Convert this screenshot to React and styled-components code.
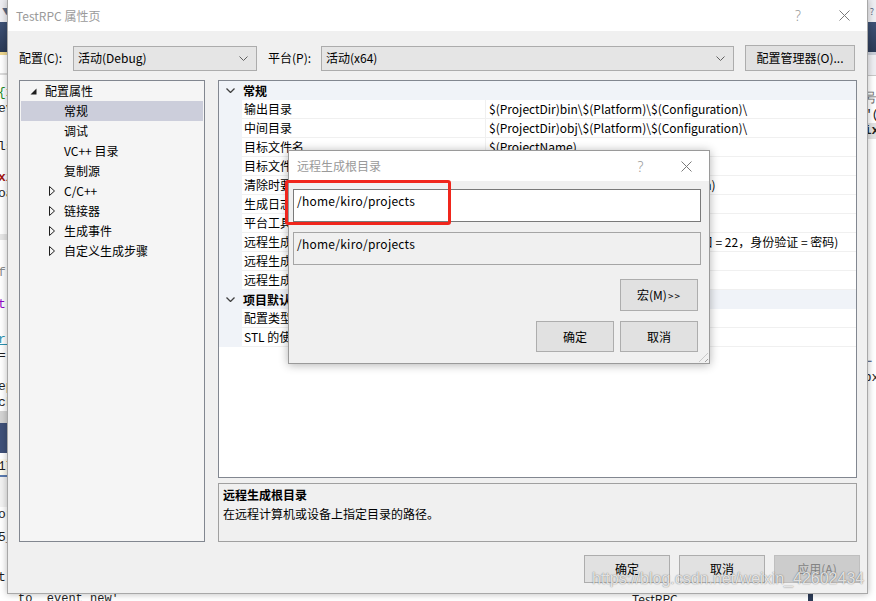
import React from "react";
import styled, { createGlobalStyle, css } from "styled-components";

const UI_FONT = `"Noto Sans CJK SC", "Noto Sans", sans-serif`;
const CODE_FONT = `"Liberation Mono", "DejaVu Sans Mono", monospace`;

const GlobalStyle = createGlobalStyle`
  html, body { margin: 0; padding: 0; background: #ffffff; }
  body { font-family: ${UI_FONT}; font-size: 12px; color: #000; }
  * { box-sizing: border-box; }
`;

/* ---------- desktop & IDE backdrop ---------- */

const Desktop = styled.div`
  position: relative;
  width: 876px;
  height: 601px;
  overflow: hidden;
  background: #ffffff;
`;

const Ide = styled.div`
  display: flex;
  flex-direction: column;
  height: 100%;
`;

const IdeToolbar = styled.div`
  height: 22px;
  background: #eeeef2;
  display: flex;
  justify-content: space-between;
  align-items: center;
  padding: 0 2px;
  color: #5b6b86;
  font-size: 9px;
`;

const IdeTabs = styled.div`
  height: 30px;
  background: linear-gradient(#3e5276, #2c3b57);
`;

const IdeAccent = styled.div`
  height: 3px;
  background: linear-gradient(90deg, #efd890 0 40px, #c9ced8 40px);
`;

const IdeEditor = styled.div`
  flex: 1;
  display: flex;
  justify-content: space-between;
  overflow: hidden;
`;

const CodeColumn = styled.div`
  display: flex;
  flex-direction: column;
  width: ${(p) => p.$w}px;
  margin-left: ${(p) => p.$shift || 0}px;
  font-family: ${CODE_FONT};
  font-size: 13px;
`;

const CodeLine = styled.div`
  height: 16px;
  line-height: 16px;
  white-space: pre;
  color: ${(p) => p.$color || "#1e1e1e"};
  font-weight: ${(p) => (p.$bold ? 700 : 400)};
  background: ${(p) => p.$bg || "transparent"};
  text-decoration: ${(p) => (p.$under ? "underline" : "none")};
`;

const Gap = styled.div`
  height: ${(p) => p.$h}px;
  flex: none;
  background: ${(p) => p.$bg || "transparent"};
`;

const IdeStatus = styled.div`
  height: 10px;
  display: flex;
  align-items: flex-start;
  font-family: ${CODE_FONT};
  font-size: 12px;
  line-height: 14px;
  padding-top: 1px;
  white-space: pre;
  color: #1e1e1e;
`;

const StatusText = styled.span`
  width: ${(p) => p.$w}px;
  padding-left: ${(p) => p.$pad || 0}px;
  flex: none;
  font-family: ${(p) => (p.$ui ? UI_FONT : CODE_FONT)};
`;

const StatusBlock = styled.span`
  width: 5px;
  height: 10px;
  background: #2c3b57;
  flex: none;
`;

/* ---------- shared window parts ---------- */

const TitleBar = styled.div`
  height: ${(p) => p.$h}px;
  background: #ffffff;
  display: flex;
  align-items: center;
  flex: none;
`;

const TitleText = styled.div`
  flex: 1;
  padding-left: 8px;
  color: #9a9a9a;
  font-size: 12px;
  line-height: 16px;
`;

const CaptionButton = styled.div`
  width: ${(p) => p.$w}px;
  height: 100%;
  display: flex;
  align-items: center;
  justify-content: center;
  color: #9a9a9a;
  font-family: "Noto Sans", sans-serif;
  font-size: 14px;
  font-weight: 300;
`;

const CloseGlyph = () => (
  <svg width="11" height="11" viewBox="0 0 11 11">
    <path d="M0.5 0.5 L10.5 10.5 M10.5 0.5 L0.5 10.5" stroke="#7a7a7a" strokeWidth="1" fill="none" />
  </svg>
);

const PushButton = styled.button`
  width: ${(p) => p.$w}px;
  height: ${(p) => p.$h}px;
  flex: none;
  margin: 0;
  padding: 0;
  font-family: ${UI_FONT};
  font-size: 12px;
  line-height: 16px;
  color: #000;
  background: #e1e1e1;
  border: 1px solid #adadad;
  ${(p) =>
    p.$disabled &&
    css`
      background: #cccccc;
      border-color: #bfbfbf;
      color: #838383;
    `}
`;

const Chevrons = styled.span`
  font-size: 10px;
  letter-spacing: 1px;
  margin-left: 1px;
`;

/* ---------- property pages window ---------- */

const MainWindow = styled.div`
  position: absolute;
  left: 7px;
  top: -1px;
  width: 861px;
  height: 595px;
  border: 1px solid #a8a8a8;
  background: #f0f0f0;
  box-shadow: 0 0 7px rgba(0, 0, 0, 0.28);
  display: flex;
  flex-direction: column;
`;

const WindowBody = styled.div`
  flex: 1;
  display: flex;
  flex-direction: column;
  padding: 14px 10px 10px 11px;
`;

const ConfigRow = styled.div`
  height: 26px;
  display: flex;
  align-items: center;
`;

const FieldLabel = styled.div`
  width: ${(p) => p.$w}px;
  padding-left: ${(p) => p.$pad || 0}px;
  flex: none;
  line-height: 16px;
`;

const Combo = styled.div`
  width: ${(p) => p.$w}px;
  height: 25px;
  flex: none;
  display: flex;
  align-items: center;
  justify-content: space-between;
  padding: 0 8px 0 4px;
  background: #e5e5e5;
  border: 1px solid #acacac;
  line-height: 16px;
`;

const ComboChevron = () => (
  <svg width="9" height="5" viewBox="0 0 9 5">
    <path d="M0.5 0.5 L4.5 4.5 L8.5 0.5" stroke="#606060" strokeWidth="1" fill="none" />
  </svg>
);

const Spacer = styled.div`
  flex: 1;
`;

const ManagerButton = styled(PushButton)`
  margin-right: 2px;
`;

const MainArea = styled.div`
  margin-top: 9px;
  height: 462px;
  display: flex;
  gap: 13px;
`;

const Tree = styled.div`
  width: 186px;
  flex: none;
  border: 1px solid #828790;
  background: #f5f5f5;
  padding: 0 1px;
`;

const TreeRow = styled.div`
  height: 20px;
  display: flex;
  align-items: center;
  padding-left: ${(p) => 9 + p.$level * 19}px;
  background: ${(p) => (p.$selected ? "#cccedb" : "transparent")};
  line-height: 16px;
`;

const TreeToggle = styled.span`
  width: 15px;
  flex: none;
  display: flex;
  align-items: center;
`;

const ExpandedMark = () => (
  <svg width="7" height="7" viewBox="0 0 7 7">
    <path d="M6.5 0.5 L6.5 6.5 L0.5 6.5 Z" fill="#1e1e1e" />
  </svg>
);

const CollapsedMark = () => (
  <svg width="6" height="10" viewBox="0 0 6 10">
    <path d="M0.5 0.5 L5.5 5 L0.5 9.5 Z" fill="none" stroke="#1e1e1e" strokeWidth="1" />
  </svg>
);

const RightColumn = styled.div`
  flex: 1;
  display: flex;
  flex-direction: column;
  gap: 5px;
`;

const Grid = styled.div`
  height: 398px;
  flex: none;
  border: 1px solid #828790;
  background: #ffffff;
`;

const GridCategory = styled.div`
  height: 19px;
  display: flex;
  align-items: center;
  background: #f0f3f8;
  font-weight: 700;
  line-height: 16px;
`;

const CategoryToggle = styled.span`
  width: 24px;
  flex: none;
  display: flex;
  justify-content: center;
  padding-right: 1px;
`;

const CategoryChevron = () => (
  <svg width="9" height="5" viewBox="0 0 9 5">
    <path d="M0.5 0.5 L4.5 4.5 L8.5 0.5" stroke="#404040" strokeWidth="1.3" fill="none" />
  </svg>
);

const GridRow = styled.div`
  height: 19px;
  display: flex;
  line-height: 18px;
`;

const GridGutter = styled.div`
  width: 23px;
  flex: none;
  background: #f0f3f8;
`;

const GridName = styled.div`
  width: 244px;
  flex: none;
  padding-left: 2px;
  border-right: 1px solid #f0f0f0;
  border-bottom: 1px solid #f0f0f0;
  white-space: nowrap;
  overflow: hidden;
`;

const GridValue = styled.div`
  flex: 1;
  padding-left: 3px;
  border-bottom: 1px solid #f0f0f0;
  white-space: pre;
  overflow: hidden;
`;

const Description = styled.div`
  flex: 1;
  border: 1px solid #a0a0a0;
  background: #f0f0f0;
  padding: 1px 4px;
  line-height: 19px;
`;

const DescTitle = styled.div`
  font-weight: 700;
`;

const FooterRow = styled.div`
  margin-top: 13px;
  margin-right: -3px;
  display: flex;
  justify-content: flex-end;
  gap: 9px;
`;

/* ---------- path editor dialog ---------- */

const Dialog = styled.div`
  position: absolute;
  left: 288px;
  top: 150px;
  width: 422px;
  height: 214px;
  border: 1px solid #9a9a9a;
  background: #f0f0f0;
  box-shadow: 0 1px 9px rgba(0, 0, 0, 0.3);
  display: flex;
  flex-direction: column;
`;

const DialogBody = styled.div`
  flex: 1;
  display: flex;
  flex-direction: column;
  padding: 8px 8px 10px 4px;
  position: relative;
`;

const PathBox = styled.div`
  height: 33px;
  flex: none;
  margin-top: ${(p) => p.$mt || 0}px;
  padding: 2px 3px;
  line-height: 18px;
  font-size: 12px;
  letter-spacing: 0.25px;
  background: ${(p) => (p.$readOnly ? "#f0f0f0" : "#ffffff")};
  border: 1px solid ${(p) => (p.$readOnly ? "#a5a5a5" : "#7a7a7a")};
`;

const DialogButtons = styled.div`
  margin-top: ${(p) => p.$mt}px;
  padding-right: 3px;
  display: flex;
  justify-content: flex-end;
  gap: 6px;
`;

const SizeGrip = styled.div`
  position: absolute;
  right: 1px;
  bottom: 1px;
  width: 9px;
  height: 9px;
  background: repeating-linear-gradient(
    135deg,
    transparent 0 2px,
    #a0a0a0 2px 3px,
    transparent 3px 4px
  );
  clip-path: polygon(100% 0, 100% 100%, 0 100%);
`;

const Highlight = styled.div`
  position: absolute;
  left: 285px;
  top: 180px;
  width: 166px;
  height: 45px;
  border: 3px solid #f0261c;
  border-radius: 3px;
`;

const Watermark = styled.div`
  position: absolute;
  left: 592px;
  top: 569px;
  font-family: "Liberation Sans", Arial, sans-serif;
  font-size: 16px;
  line-height: 20px;
  letter-spacing: 0px;
  color: rgba(255, 255, 255, 0.8);
  text-shadow: 0 0 1px rgba(0, 0, 0, 0.45), 0 0 2px rgba(0, 0, 0, 0.2);
  white-space: nowrap;
`;

/* ---------- data ---------- */

const treeItems = [
  { label: "配置属性", level: 0, mark: "open" },
  { label: "常规", level: 1, selected: true },
  { label: "调试", level: 1 },
  { label: "VC++ 目录", level: 1 },
  { label: "复制源", level: 1 },
  { label: "C/C++", level: 1, mark: "closed" },
  { label: "链接器", level: 1, mark: "closed" },
  { label: "生成事件", level: 1, mark: "closed" },
  { label: "自定义生成步骤", level: 1, mark: "closed" },
];

const sections = [
  {
    title: "常规",
    rows: [
      ["输出目录", "$(ProjectDir)bin\\$(Platform)\\$(Configuration)\\"],
      ["中间目录", "$(ProjectDir)obj\\$(Platform)\\$(Configuration)\\"],
      ["目标文件名", "$(ProjectName)"],
      ["目标文件扩展名", ".out"],
      ["清除时要删除的扩展名", "*.d;*.tlog; $(ExtensionsToDeleteOnClean)"],
      ["生成日志文件", "$(IntDir)$(MSBuildProjectName).log"],
      ["平台工具集", "Remote_GCC_1_0"],
      ["远程生成计算机", "192.168.150.128 (用户名 = kirolinux, 端口 = 22，身份验证 = 密码)"],
      ["远程生成根目录", "~/projects"],
      ["远程生成项目目录", "$(RemoteRootDir)/$(ProjectName)"],
    ],
  },
  {
    title: "项目默认值",
    rows: [
      ["配置类型", "应用程序(.out)"],
      ["STL 的使用", "共享 GNU 标准 C++ 库"],
    ],
  },
];

/* editor text peeking out at the left edge */
const leftCode = [
  { gap: 18 },
  { gap: 2, bg: "#dcdcdc" },
  { gap: 10 },
  { text: "{x", color: "#1c8a1c" },
  { text: "ev" },
  { gap: 22 },
  { text: "ls" },
  { gap: 15 },
  { text: "xi", color: "#a31515", bold: true },
  { text: "oa" },
  { gap: 32 },
  { gap: 6, bg: "#e6e6e6" },
  { gap: 25 },
  { text: "f", color: "#8a8a8a" },
  { gap: 16 },
  { text: "t", color: "#8f08c4" },
  { gap: 19 },
  { text: "r_", color: "#2b91af", under: true },
  { text: "=" },
  { gap: 15 },
  { text: "ep" },
  { text: "ck" },
  { gap: 12, bg: "#d4d4d4" },
  { gap: 30, bg: "#3f5179" },
  { gap: 6 },
  { text: "17", bg: "#fdfbf0" },
  { gap: 2, bg: "#5b7bb0" },
  { gap: 30, bg: "#f2f2f2" },
  { text: "or" },
  { gap: 7 },
  { text: "5_" },
  { gap: 24 },
  { text: "t" },
];

/* editor text peeking out at the right edge */
const rightCode = [
  { gap: 20, bg: "#eeeef2" },
  { gap: 1, bg: "#c8c8c8" },
  { gap: 15 },
  { text: " 号(", color: "#6b6b6b" },
  { text: " \"(" },
  { text: " ix", bold: true, bg: "#e2e2e2" },
  { gap: 215 },
  { text: " ─", color: "#3f5179", bold: true },
  { text: " bx" },
];

const renderCode = (items) =>
  items.map((it, i) =>
    it.text !== undefined ? (
      <CodeLine key={i} $color={it.color} $bold={it.bold} $bg={it.bg} $under={it.under}>
        {it.text}
      </CodeLine>
    ) : (
      <Gap key={i} $h={it.gap} $bg={it.bg} />
    )
  );

/* ---------- page ---------- */

export default function App() {
  return (
    <Desktop>
      <GlobalStyle />

      <Ide>
        <IdeToolbar>
          <span>▼</span>
          <span>?</span>
        </IdeToolbar>
        <IdeTabs />
        <IdeAccent />
        <IdeEditor>
          <CodeColumn $w={40} $shift={-2}>{renderCode(leftCode)}</CodeColumn>
          <CodeColumn $w={20}>{renderCode(rightCode)}</CodeColumn>
        </IdeEditor>
        <IdeStatus>
          <StatusText $w={632} $pad={18}>to `event_new'</StatusText>
          <StatusText $w={176} $ui>TestRPC</StatusText>
          <StatusBlock />
        </IdeStatus>
      </Ide>

      <MainWindow>
        <TitleBar $h={31}>
          <TitleText>TestRPC 属性页</TitleText>
          <CaptionButton $w={46}>?</CaptionButton>
          <CaptionButton $w={46}>
            <CloseGlyph />
          </CaptionButton>
        </TitleBar>

        <WindowBody>
          <ConfigRow>
            <FieldLabel $w={54}>配置(C):</FieldLabel>
            <Combo $w={184}>
              <span>活动(Debug)</span>
              <ComboChevron />
            </Combo>
            <FieldLabel $w={64} $pad={11}>平台(P):</FieldLabel>
            <Combo $w={413}>
              <span>活动(x64)</span>
              <ComboChevron />
            </Combo>
            <Spacer />
            <ManagerButton $w={110} $h={26}>配置管理器(O)...</ManagerButton>
          </ConfigRow>

          <MainArea>
            <Tree>
              {treeItems.map((item) => (
                <TreeRow key={item.label} $level={item.level} $selected={item.selected}>
                  <TreeToggle>
                    {item.mark === "open" && <ExpandedMark />}
                    {item.mark === "closed" && <CollapsedMark />}
                  </TreeToggle>
                  {item.label}
                </TreeRow>
              ))}
            </Tree>

            <RightColumn>
              <Grid>
                {sections.map((section) => (
                  <React.Fragment key={section.title}>
                    <GridCategory>
                      <CategoryToggle>
                        <CategoryChevron />
                      </CategoryToggle>
                      {section.title}
                    </GridCategory>
                    {section.rows.map(([name, value]) => (
                      <GridRow key={name}>
                        <GridGutter />
                        <GridName>{name}</GridName>
                        <GridValue>{value}</GridValue>
                      </GridRow>
                    ))}
                  </React.Fragment>
                ))}
              </Grid>

              <Description>
                <DescTitle>远程生成根目录</DescTitle>
                <div>在远程计算机或设备上指定目录的路径。</div>
              </Description>
            </RightColumn>
          </MainArea>

          <FooterRow>
            <PushButton $w={86} $h={28}>确定</PushButton>
            <PushButton $w={86} $h={28}>取消</PushButton>
            <PushButton $w={86} $h={28} $disabled>应用(A)</PushButton>
          </FooterRow>
        </WindowBody>
      </MainWindow>

      <Dialog>
        <TitleBar $h={30}>
          <TitleText>远程生成根目录</TitleText>
          <CaptionButton $w={45}>?</CaptionButton>
          <CaptionButton $w={46}>
            <CloseGlyph />
          </CaptionButton>
        </TitleBar>
        <DialogBody>
          <PathBox>/home/kiro/projects</PathBox>
          <PathBox $mt={10} $readOnly>
            /home/kiro/projects
          </PathBox>
          <DialogButtons $mt={14}>
            <PushButton $w={78} $h={32}>
              宏(M)<Chevrons>&gt;&gt;</Chevrons>
            </PushButton>
          </DialogButtons>
          <DialogButtons $mt={10}>
            <PushButton $w={78} $h={31}>确定</PushButton>
            <PushButton $w={78} $h={31}>取消</PushButton>
          </DialogButtons>
          <SizeGrip />
        </DialogBody>
      </Dialog>

      <Highlight />
      <Watermark>https://blog.csdn.net/weixin_42602434</Watermark>
    </Desktop>
  );
}
